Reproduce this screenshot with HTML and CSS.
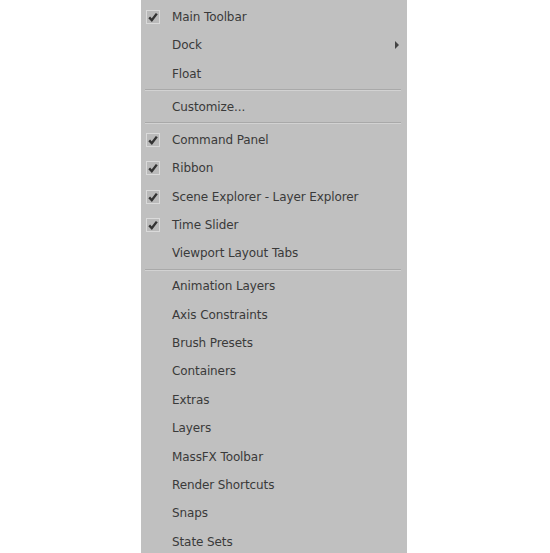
FILE: index.html
```html
<!DOCTYPE html>
<html>
<head>
    <title>Toolbars</title>
    <link rel="stylesheet" href="styles.css">
</head>
<body>
    <div class="menu">
        <div class="item checked"><span class="check"><svg viewBox="0 0 14 14"><rect x="0.5" y="0.5" width="13" height="13"/><path d="M3.2 7.4 L5.8 10.2 L10.8 3.6"/></svg></span>Main Toolbar</div>
        <div class="item">Dock<span class="arrow"></span></div>
        <div class="item">Float</div>
        <div class="sep"></div>
        <div class="item">Customize...</div>
        <div class="sep"></div>
        <div class="item checked"><span class="check"><svg viewBox="0 0 14 14"><rect x="0.5" y="0.5" width="13" height="13"/><path d="M3.2 7.4 L5.8 10.2 L10.8 3.6"/></svg></span>Command Panel</div>
        <div class="item checked"><span class="check"><svg viewBox="0 0 14 14"><rect x="0.5" y="0.5" width="13" height="13"/><path d="M3.2 7.4 L5.8 10.2 L10.8 3.6"/></svg></span>Ribbon</div>
        <div class="item checked"><span class="check"><svg viewBox="0 0 14 14"><rect x="0.5" y="0.5" width="13" height="13"/><path d="M3.2 7.4 L5.8 10.2 L10.8 3.6"/></svg></span>Scene Explorer - Layer Explorer</div>
        <div class="item checked"><span class="check"><svg viewBox="0 0 14 14"><rect x="0.5" y="0.5" width="13" height="13"/><path d="M3.2 7.4 L5.8 10.2 L10.8 3.6"/></svg></span>Time Slider</div>
        <div class="item">Viewport Layout Tabs</div>
        <div class="sep"></div>
        <div class="item">Animation Layers</div>
        <div class="item">Axis Constraints</div>
        <div class="item">Brush Presets</div>
        <div class="item">Containers</div>
        <div class="item">Extras</div>
        <div class="item">Layers</div>
        <div class="item">MassFX Toolbar</div>
        <div class="item">Render Shortcuts</div>
        <div class="item">Snaps</div>
        <div class="item">State Sets</div>
    </div>
</body>
</html>
```

FILE: styles.css
```css
html, body {
    margin: 0;
    height: 100%;
    background: #fff;
    overflow: hidden;
}
body {
    padding-left: 141px;
}
.menu {
    width: 266px;
    height: 100%;
    background: #c0c0c0;
    padding-top: 3px;
    box-sizing: border-box;
    font-family: Tahoma, "DejaVu Sans", sans-serif;
    font-size: 12px;
    letter-spacing: -0.1px;
    color: #3a3a3a;
}
.item {
    position: relative;
    height: 28.4px;
    line-height: 28.4px;
    padding-left: 31px;
    white-space: nowrap;
}
.check {
    position: absolute;
    left: 5px;
    top: 7px;
    width: 14px;
    height: 14px;
}
.check svg {
    display: block;
    width: 14px;
    height: 14px;
}
.check rect {
    fill: #bababa;
    stroke: #dadada;
    stroke-width: 1;
}
.check path {
    fill: none;
    stroke: #333;
    stroke-width: 2.4;
}
.arrow {
    position: absolute;
    right: 8px;
    top: 10px;
    width: 0;
    height: 0;
    border-top: 4px solid transparent;
    border-bottom: 4px solid transparent;
    border-left: 4px solid #444;
}
.sep {
    height: 4.6px;
    margin: 0 6px 0 4px;
    position: relative;
}
.sep::after {
    content: "";
    position: absolute;
    left: 0;
    right: 0;
    top: 1px;
    height: 1px;
    background: #a9a9a9;
    border-bottom: 1px solid #d2d2d2;
}
```
